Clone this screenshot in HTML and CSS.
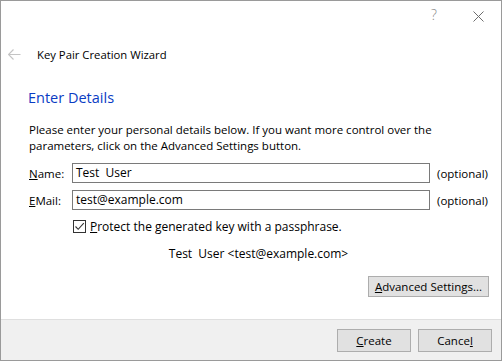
FILE: index.html
```html
<!DOCTYPE html>
<html lang="en">
<head>
    <meta charset="UTF-8">
    <title>Key Pair Creation Wizard</title>
    <link rel="stylesheet" href="styles.css">
</head>
<body>
    <div class="window">
        <div class="titlebar">
            <span class="title-btn help">?</span>
            <span class="title-btn close">
                <svg width="11" height="11" viewBox="0 0 11 11">
                    <path d="M0.5 0.5 L10.5 10.5 M10.5 0.5 L0.5 10.5" stroke="#6d6d6d" stroke-width="1" fill="none"/>
                </svg>
            </span>
        </div>

        <div class="header">
            <svg class="back" width="13" height="11" viewBox="0 0 13 11">
                <path d="M0.5 5.5 H12.5 M5.5 0.5 L0.5 5.5 L5.5 10.5" stroke="#c4c4c4" stroke-width="1.2" fill="none"/>
            </svg>
            <span class="wizard-title">Key Pair Creation Wizard</span>
        </div>

        <div class="content">
            <h2 class="page-title">Enter Details</h2>
            <p class="intro">Please enter your personal details below. If you want more control over the parameters, click on the Advanced Settings button.</p>

            <div class="field">
                <label class="field-label"><u>N</u>ame:</label>
                <div class="text-input">Test&nbsp; User</div>
                <span class="hint">(optional)</span>
            </div>
            <div class="field">
                <label class="field-label"><u>E</u>Mail:</label>
                <div class="text-input">test@example.com</div>
                <span class="hint">(optional)</span>
            </div>

            <div class="check-row">
                <span class="checkbox">
                    <svg width="11" height="11" viewBox="0 0 11 11">
                        <path d="M1.5 5.5 L4.2 8.3 L9.8 2.2" stroke="#333" stroke-width="1.1" fill="none"/>
                    </svg>
                </span>
                <span class="check-label"><u>P</u>rotect the generated key with a passphrase.</span>
            </div>

            <div class="summary">Test&nbsp; User &lt;test@example.com&gt;</div>

            <div class="advanced-row">
                <button class="button wide"><u>A</u>dvanced Settings...</button>
            </div>
        </div>

        <div class="footer">
            <button class="button"><u>C</u>reate</button>
            <button class="button">Cance<u>l</u></button>
        </div>
    </div>
</body>
</html>
```

FILE: styles.css
```css
* {
    box-sizing: border-box;
    margin: 0;
    padding: 0;
}

body {
    font-family: 'Open Sans', 'Noto Sans', sans-serif;
    font-size: 11.5px;
    color: #000;
    background: #fff;
}

.window {
    width: 502px;
    height: 361px;
    border: 1px solid #9a9a9a;
    background: #fff;
    display: flex;
    flex-direction: column;
}

.titlebar {
    height: 30px;
    display: flex;
    justify-content: flex-end;
    align-items: center;
    padding-right: 17px;
}

.title-btn {
    color: #8a8a8a;
    display: flex;
    align-items: center;
}

.help {
    font-size: 14px;
    font-weight: 300;
    margin-right: 36px;
    margin-top: -3px;
}

.header {
    height: 46px;
    display: flex;
    align-items: center;
    padding-left: 7px;
}

.back {
    margin-right: 16px;
}

.wizard-title {
    font-size: 11.3px;
}

.content {
    flex: 1;
    padding: 0 12px 0 27px;
}

.page-title {
    font-size: 14.5px;
    font-weight: 400;
    line-height: 20px;
    color: #0a3cc4;
    margin-top: 11px;
}

.intro {
    line-height: 16px;
    margin-top: 14px;
    padding-left: 1px;
}

.field {
    display: flex;
    align-items: center;
    margin-top: 7px;
    padding-left: 1px;
}

.intro + .field {
    margin-top: 9px;
}

.field-label {
    width: 43px;
}

.text-input {
    width: 358px;
    height: 20px;
    border: 1px solid #7a7a7a;
    padding-left: 3px;
    line-height: 18px;
    font-size: 12px;
}

.hint {
    margin-left: 7px;
}

.check-row {
    display: flex;
    align-items: center;
    margin-top: 8px;
    padding-left: 45px;
    height: 17px;
}

.check-label {
    font-size: 12px;
}

.checkbox {
    width: 13px;
    height: 13px;
    border: 1px solid #333;
    margin-right: 4px;
    display: flex;
    align-items: center;
    justify-content: center;
}

.summary {
    text-align: center;
    line-height: 16px;
    margin-top: 11px;
    font-size: 12px;
}

.advanced-row {
    display: flex;
    justify-content: flex-end;
    margin-top: 14px;
}

.button {
    font-family: inherit;
    font-size: 11.5px;
    color: #000;
    background: #e1e1e1;
    border: 1px solid #adadad;
    width: 74px;
    height: 23px;
}

.button.wide {
    width: 121px;
    height: 21px;
}

.footer {
    height: 41px;
    border-top: 1px solid #dfdfdf;
    background: #f0f0f0;
    display: flex;
    justify-content: flex-end;
    align-items: center;
    gap: 7px;
    padding-right: 9px;
}
```
